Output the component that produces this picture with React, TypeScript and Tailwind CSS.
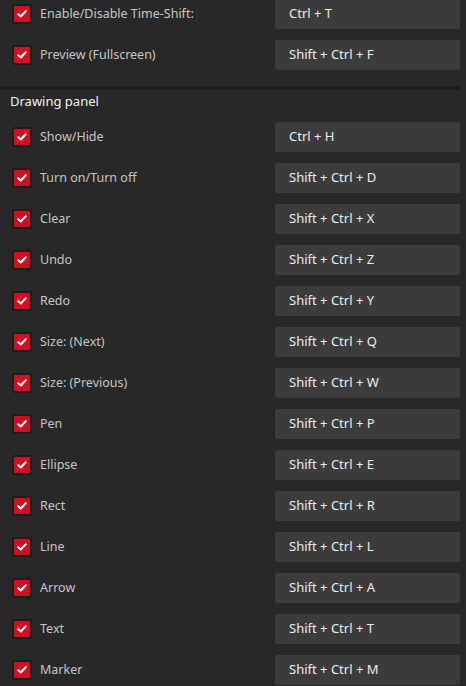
const top = [
  { label: 'Enable/Disable Time-Shift:', keys: 'Ctrl + T' },
  { label: 'Preview (Fullscreen)', keys: 'Shift + Ctrl + F' },
];

const drawing = [
  { label: 'Show/Hide', keys: 'Ctrl + H' },
  { label: 'Turn on/Turn off', keys: 'Shift + Ctrl + D' },
  { label: 'Clear', keys: 'Shift + Ctrl + X' },
  { label: 'Undo', keys: 'Shift + Ctrl + Z' },
  { label: 'Redo', keys: 'Shift + Ctrl + Y' },
  { label: 'Size: (Next)', keys: 'Shift + Ctrl + Q' },
  { label: 'Size: (Previous)', keys: 'Shift + Ctrl + W' },
  { label: 'Pen', keys: 'Shift + Ctrl + P' },
  { label: 'Ellipse', keys: 'Shift + Ctrl + E' },
  { label: 'Rect', keys: 'Shift + Ctrl + R' },
  { label: 'Line', keys: 'Shift + Ctrl + L' },
  { label: 'Arrow', keys: 'Shift + Ctrl + A' },
  { label: 'Text', keys: 'Shift + Ctrl + T' },
  { label: 'Marker', keys: 'Shift + Ctrl + M' },
];

function Check() {
  return (
    <span className="flex h-5 w-5 shrink-0 items-center justify-center rounded-[2px] bg-[#1c1c1c]">
      <span className="flex h-4 w-4 items-center justify-center rounded-[1px] bg-[#d20f22]">
        <svg width="10" height="8" viewBox="0 0 10 8" fill="none">
          <path d="M1.3 4.2 L3.8 6.5 L8.7 1.3" stroke="#fff" strokeWidth="2" strokeLinecap="round" strokeLinejoin="round" />
        </svg>
      </span>
    </span>
  );
}

function Row({ label, keys }: { label: string; keys: string }) {
  return (
    <div className="flex h-[30px] items-center">
      <div className="flex flex-1 items-center gap-2 pl-3">
        <Check />
        <span className="text-[12.5px] text-[#c6c6c6]">{label}</span>
      </div>
      <div className="flex h-[30px] w-[185px] items-center rounded-[2px] bg-[#3c3c3c] pl-[14px] text-[13px] text-[#ececec]">
        {keys}
      </div>
    </div>
  );
}

export default function App() {
  return (
    <div
      className="h-[686px] w-[466px] overflow-hidden bg-[#282828] pr-[6px]"
      style={{ fontFamily: '"Noto Sans", "Open Sans", sans-serif' }}
    >
      <div className="-mt-px flex flex-col gap-[11px]">
        {top.map((r) => (
          <Row key={r.label} {...r} />
        ))}
      </div>
      <div className="mt-4 h-1 bg-[#1e1e1e]" />
      <div className="h-8 pl-[10px] pt-[2px] text-[13px] leading-[18px] text-[#f2f2f2]">Drawing panel</div>
      <div className="flex flex-col gap-[11px]">
        {drawing.map((r) => (
          <Row key={r.label} {...r} />
        ))}
      </div>
    </div>
  );
}
